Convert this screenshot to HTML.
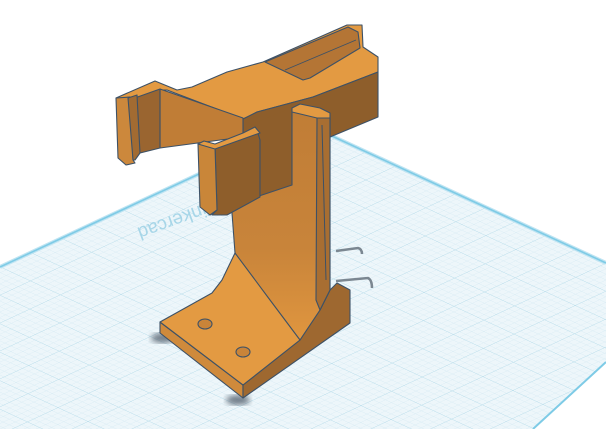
<!DOCTYPE html>
<html><head><meta charset="utf-8"><style>
html,body{margin:0;padding:0;background:#fff;width:606px;height:429px;overflow:hidden}
svg{display:block}
</style></head><body>
<svg width="606" height="429" viewBox="0 0 606 429" xmlns="http://www.w3.org/2000/svg">
<defs>
<pattern id="minor" width="10" height="10" patternUnits="userSpaceOnUse" patternTransform="matrix(0.612,-0.286,0.6,0.278,0,267)">
<path d="M0 0H10M0 0V10" stroke="#d3e9f2" stroke-width="1.2" fill="none"/>
</pattern>
<pattern id="major" width="50" height="50" patternUnits="userSpaceOnUse" patternTransform="matrix(0.612,-0.286,0.6,0.278,0,267)">
<path d="M0 0H50M0 0V50" stroke="#b7dcea" stroke-width="1.5" fill="none"/>
</pattern>
<linearGradient id="up" x1="0" y1="0" x2="0" y2="1">
<stop offset="0" stop-color="#c07d36"/><stop offset="0.6" stop-color="#c8843a"/><stop offset="1" stop-color="#e0963f"/>
</linearGradient>
<filter id="bl"><feGaussianBlur stdDeviation="3"/></filter>
</defs>
<polygon points="0,267 306,124 606,263 606,362 533,429 0,429" fill="#edf6fa"/>
<polygon points="0,267 306,124 606,263 606,362 533,429 0,429" fill="url(#minor)"/>
<polygon points="0,267 306,124 606,263 606,362 533,429 0,429" fill="url(#major)"/>
<polyline points="0,267 306,124 606,263" fill="none" stroke="#bfe4f2" stroke-width="4"/>
<polyline points="0,267 306,124 606,263" fill="none" stroke="#7ecbe6" stroke-width="1.6"/>
<polyline points="606,362 533,429" fill="none" stroke="#7ecbe6" stroke-width="2"/>
<text x="0" y="0" transform="translate(214,200) rotate(160)" font-family="Liberation Sans, sans-serif" font-size="19" fill="#a7d6e8">Tinkercad</text>
<!-- shadows -->
<ellipse cx="163" cy="338" rx="12" ry="5" fill="#52606e" filter="url(#bl)" opacity="0.8"/>
<ellipse cx="238" cy="400" rx="12" ry="5" fill="#52606e" filter="url(#bl)" opacity="0.8"/>
<path d="M336 251 L358 248 Q362 249 362 254" stroke="#7b8791" stroke-width="2.5" fill="none"/>
<path d="M336 281 L368 278 Q372 280 372 288" stroke="#7b8791" stroke-width="2.5" fill="none"/>
<g stroke="#3d5166" stroke-width="1.1" stroke-linejoin="round">
<!-- arm top face -->
<polygon points="116,98 155,81 177,90 192,87 227,72 263,62 347,25 362,25 363,47 378,57 378,72 313,97 257,112 250,116 243,119 167,90 160,90 132,99" fill="#e39a42"/>
<polygon points="265,62 348,27 358,32 360,48 310,78 303,80" fill="#b47535"/>
<line x1="285" y1="70" x2="356" y2="40" stroke-width="0.9"/>
<!-- dark housing front -->
<polygon points="243,119 257,112 313,97 378,72 378,117 330,137 292,160 260,200 243,137" fill="#8e5e2b"/>
<polygon points="250,125 296,106 296,195 250,210" fill="#8e5e2b" stroke="none"/>
<!-- base -->
<polygon points="160,322 243,385 243,398 160,333" fill="#cf8a3c"/>
<polygon points="243,385 300,340 320,310 330,290 337,283 350,290 350,323 243,398" fill="#9e6830"/>
<!-- upright -->
<polygon points="232,205 292,185 292,108 317,115 330,115 330,290 320,310 300,340 270,320 235,253 232,213" fill="url(#up)"/>
<polygon points="160,322 212,293 222,280 235,253 270,300 300,340 243,385" fill="#e39a42"/>
<ellipse cx="205" cy="324" rx="7" ry="5" fill="#c98439"/>
<ellipse cx="243" cy="352" rx="7" ry="5" fill="#c98439"/>
<!-- arm inner face -->
<polygon points="160,89 243,118 243,137 160,148" fill="#c07d36"/>
<polygon points="132,99 160,89 160,148 140,153" fill="#9a6530"/>
<!-- hook plate -->
<polygon points="116,98 130,97 133,160 135,163 126,165 118,158" fill="#cc883c"/>
<polygon points="128,98 137,95 140,153 135,160 133,160" fill="#a26b32"/>
<!-- rib -->
<polygon points="292,108 300,104 320,108 330,113 330,120 317,118 292,112" fill="#e39a42"/>
<polygon points="317,118 330,118 330,290 320,310 316,300" fill="#a86e32"/>
<line x1="322" y1="125" x2="326" y2="280" stroke-width="1"/>
<!-- front clip -->
<polygon points="215,147 243,137 257,130 260,140 260,197 227,215 212,215 217,210" fill="#8e5e2b"/>
<polygon points="198,144 215,147 217,210 210,215 200,207" fill="#c98639"/>
<polygon points="198,144 204,141 215,144 243,133 255,127 260,133 257,134 243,139 215,149" fill="#e39a42"/>
</g>
</svg>
</body></html>
